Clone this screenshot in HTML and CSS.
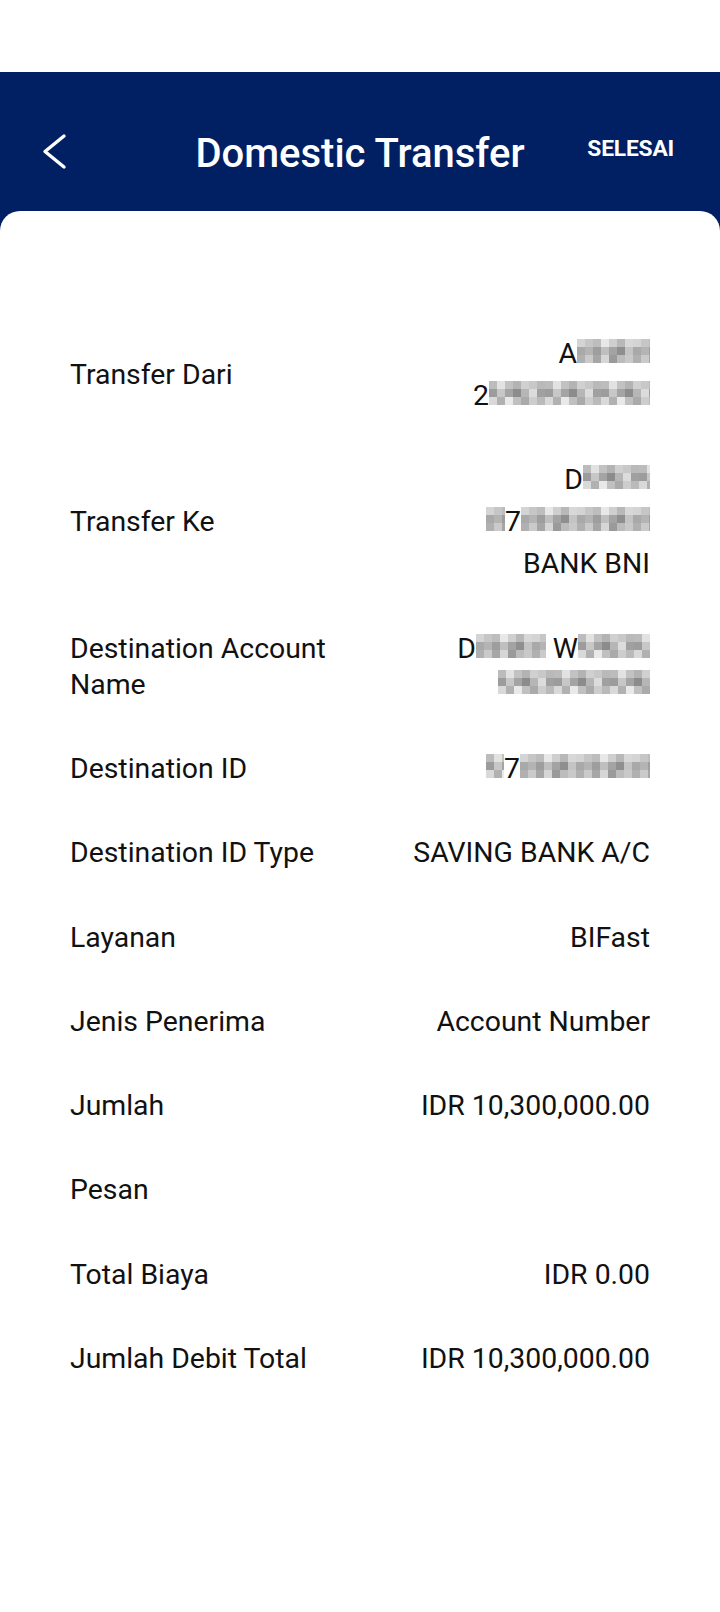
FILE: index.html
```html
<!DOCTYPE html>
<html lang="id">
<head>
<meta charset="utf-8">
<title>Domestic Transfer</title>
<link rel="stylesheet" href="styles.css">
</head>
<body>
<svg class="defs" width="0" height="0" aria-hidden="true">
  <defs>
    <pattern id="mA" patternUnits="userSpaceOnUse" width="56" height="24">
      <rect x="0" y="0" width="8" height="8" fill="#d4d4d4"/><rect x="8" y="0" width="8" height="8" fill="#c6c6c6"/><rect x="16" y="0" width="8" height="8" fill="#bdbdbd"/><rect x="24" y="0" width="8" height="8" fill="#e8e8e8"/><rect x="32" y="0" width="8" height="8" fill="#cfcfcf"/><rect x="40" y="0" width="8" height="8" fill="#b8b8b8"/><rect x="48" y="0" width="8" height="8" fill="#d8d8d8"/>
      <rect x="0" y="8" width="8" height="8" fill="#a9a9a9"/><rect x="8" y="8" width="8" height="8" fill="#b4b4b4"/><rect x="16" y="8" width="8" height="8" fill="#9e9e9e"/><rect x="24" y="8" width="8" height="8" fill="#bfbfbf"/><rect x="32" y="8" width="8" height="8" fill="#a3a3a3"/><rect x="40" y="8" width="8" height="8" fill="#8f8f8f"/><rect x="48" y="8" width="8" height="8" fill="#c4c4c4"/>
      <rect x="0" y="16" width="8" height="8" fill="#b0b0b0"/><rect x="8" y="16" width="8" height="8" fill="#cacaca"/><rect x="16" y="16" width="8" height="8" fill="#a6a6a6"/><rect x="24" y="16" width="8" height="8" fill="#d6d6d6"/><rect x="32" y="16" width="8" height="8" fill="#9a9a9a"/><rect x="40" y="16" width="8" height="8" fill="#bcbcbc"/><rect x="48" y="16" width="8" height="8" fill="#c9c9c9"/>
    </pattern>
    <pattern id="mB" patternUnits="userSpaceOnUse" width="56" height="24">
      <rect x="0" y="0" width="8" height="8" fill="#bcbcbc"/><rect x="8" y="0" width="8" height="8" fill="#e2e2e2"/><rect x="16" y="0" width="8" height="8" fill="#c2c2c2"/><rect x="24" y="0" width="8" height="8" fill="#b3b3b3"/><rect x="32" y="0" width="8" height="8" fill="#d0d0d0"/><rect x="40" y="0" width="8" height="8" fill="#c8c8c8"/><rect x="48" y="0" width="8" height="8" fill="#b9b9b9"/>
      <rect x="0" y="8" width="8" height="8" fill="#9c9c9c"/><rect x="8" y="8" width="8" height="8" fill="#c7c7c7"/><rect x="16" y="8" width="8" height="8" fill="#a4a4a4"/><rect x="24" y="8" width="8" height="8" fill="#8c8c8c"/><rect x="32" y="8" width="8" height="8" fill="#b6b6b6"/><rect x="40" y="8" width="8" height="8" fill="#dcdcdc"/><rect x="48" y="8" width="8" height="8" fill="#a0a0a0"/>
      <rect x="0" y="16" width="8" height="8" fill="#d9d9d9"/><rect x="8" y="16" width="8" height="8" fill="#b1b1b1"/><rect x="16" y="16" width="8" height="8" fill="#e9e9e9"/><rect x="24" y="16" width="8" height="8" fill="#c0c0c0"/><rect x="32" y="16" width="8" height="8" fill="#aaaaaa"/><rect x="40" y="16" width="8" height="8" fill="#cdcdcd"/><rect x="48" y="16" width="8" height="8" fill="#bababa"/>
    </pattern>
  </defs>
</svg>

<div class="statusbar"></div>

<div class="screen">
  <header class="toolbar">
    <div class="tb-left">
      <svg class="back" width="28" height="40" viewBox="0 0 28 40" aria-label="Kembali">
        <polyline points="24,4 5,19.5 24,35" fill="none" stroke="#ffffff" stroke-width="3.4" stroke-linecap="round" stroke-linejoin="round"/>
      </svg>
    </div>
    <h1 class="title">Domestic Transfer</h1>
    <div class="tb-right"><span class="done">SELESAI</span></div>
  </header>

  <main class="card">
    <div class="row">
      <div class="label">Transfer Dari</div>
      <div class="value">
        <div class="vline">A<svg class="mos" width="73" height="24"><rect width="100%" height="100%" fill="url(#mA)"/></svg></div>
        <div class="vline">2<svg class="mos" width="161" height="24"><rect width="100%" height="100%" fill="url(#mB)"/></svg></div>
      </div>
    </div>

    <div class="row">
      <div class="label">Transfer Ke</div>
      <div class="value">
        <div class="vline">D<svg class="mos" width="67" height="24"><rect width="100%" height="100%" fill="url(#mB)"/></svg></div>
        <div class="vline"><svg class="mos" width="19" height="24"><rect width="100%" height="100%" fill="url(#mA)"/></svg>7<svg class="mos" width="129" height="24"><rect width="100%" height="100%" fill="url(#mA)"/></svg></div>
        <div class="vline">BANK BNI</div>
      </div>
    </div>

    <div class="row">
      <div class="label">Destination Account Name</div>
      <div class="value">
        <div class="wline">D<svg class="mos" width="70" height="24"><rect width="100%" height="100%" fill="url(#mA)"/></svg> W<svg class="mos" width="72" height="24"><rect width="100%" height="100%" fill="url(#mB)"/></svg></div>
        <div class="wline"><svg class="mos" width="152" height="24"><rect width="100%" height="100%" fill="url(#mB)"/></svg></div>
      </div>
    </div>

    <div class="row">
      <div class="label">Destination ID</div>
      <div class="value">
        <div class="wline"><svg class="mos" width="18" height="24"><rect width="100%" height="100%" fill="url(#mB)"/></svg>7<svg class="mos" width="130" height="24"><rect width="100%" height="100%" fill="url(#mA)"/></svg></div>
      </div>
    </div>

    <div class="row">
      <div class="label">Destination ID Type</div>
      <div class="value"><div class="wline">SAVING BANK A/C</div></div>
    </div>

    <div class="row">
      <div class="label">Layanan</div>
      <div class="value"><div class="wline">BIFast</div></div>
    </div>

    <div class="row">
      <div class="label">Jenis Penerima</div>
      <div class="value"><div class="wline">Account Number</div></div>
    </div>

    <div class="row">
      <div class="label">Jumlah</div>
      <div class="value"><div class="wline">IDR 10,300,000.00</div></div>
    </div>

    <div class="row">
      <div class="label">Pesan</div>
      <div class="value"><div class="wline"></div></div>
    </div>

    <div class="row">
      <div class="label">Total Biaya</div>
      <div class="value"><div class="wline">IDR 0.00</div></div>
    </div>

    <div class="row">
      <div class="label">Jumlah Debit Total</div>
      <div class="value"><div class="wline">IDR 10,300,000.00</div></div>
    </div>
  </main>
</div>
</body>
</html>
```

FILE: styles.css
```css
* {
  box-sizing: border-box;
}

html, body {
  margin: 0;
  padding: 0;
  background: #ffffff;
}

body {
  font-family: Roboto, "Noto Sans", "Liberation Sans", sans-serif;
  color: #111111;
  width: 720px;
  min-height: 1612px;
}

.defs {
  position: absolute;
  width: 0;
  height: 0;
  overflow: hidden;
}

.statusbar {
  height: 72px;
  background: #ffffff;
}

.screen {
  background: #011f63;
  min-height: 1540px;
  display: flex;
  flex-direction: column;
}

.toolbar {
  height: 160px;
  display: grid;
  grid-template-columns: 1fr auto 1fr;
  align-items: center;
  padding: 0 46px;
  color: #ffffff;
}

.tb-left {
  display: flex;
  align-items: center;
}

.back {
  display: block;
  margin-left: -6px;
  margin-top: -1px;
}

.title {
  margin: 0;
  padding-top: 4px;
  font-size: 40px;
  font-weight: 500;
  line-height: 46px;
  letter-spacing: 0;
  white-space: nowrap;
}

.tb-right {
  display: flex;
  justify-content: flex-end;
}

.done {
  font-size: 22.8px;
  font-weight: 700;
  line-height: 26px;
  margin-top: -6px;
  letter-spacing: -0.2px;
}

.card {
  flex: 1;
  margin-top: -21px;
  background: #ffffff;
  border-radius: 20px 20px 0 0;
  padding: 101px 70px 40px 70px;
}

.row {
  display: flex;
  align-items: center;
  padding: 24.15px 0;
  font-size: 28.4px;
  line-height: 36px;
}

.label {
  flex: 0 0 290px;
  padding-right: 16px;
}

.value {
  flex: 1;
  text-align: right;
}

.vline + .vline {
  margin-top: 6px;
}

.vline, .wline {
  min-height: 36px;
  white-space: nowrap;
}

.mos {
  display: inline-block;
  vertical-align: baseline;
}
```
